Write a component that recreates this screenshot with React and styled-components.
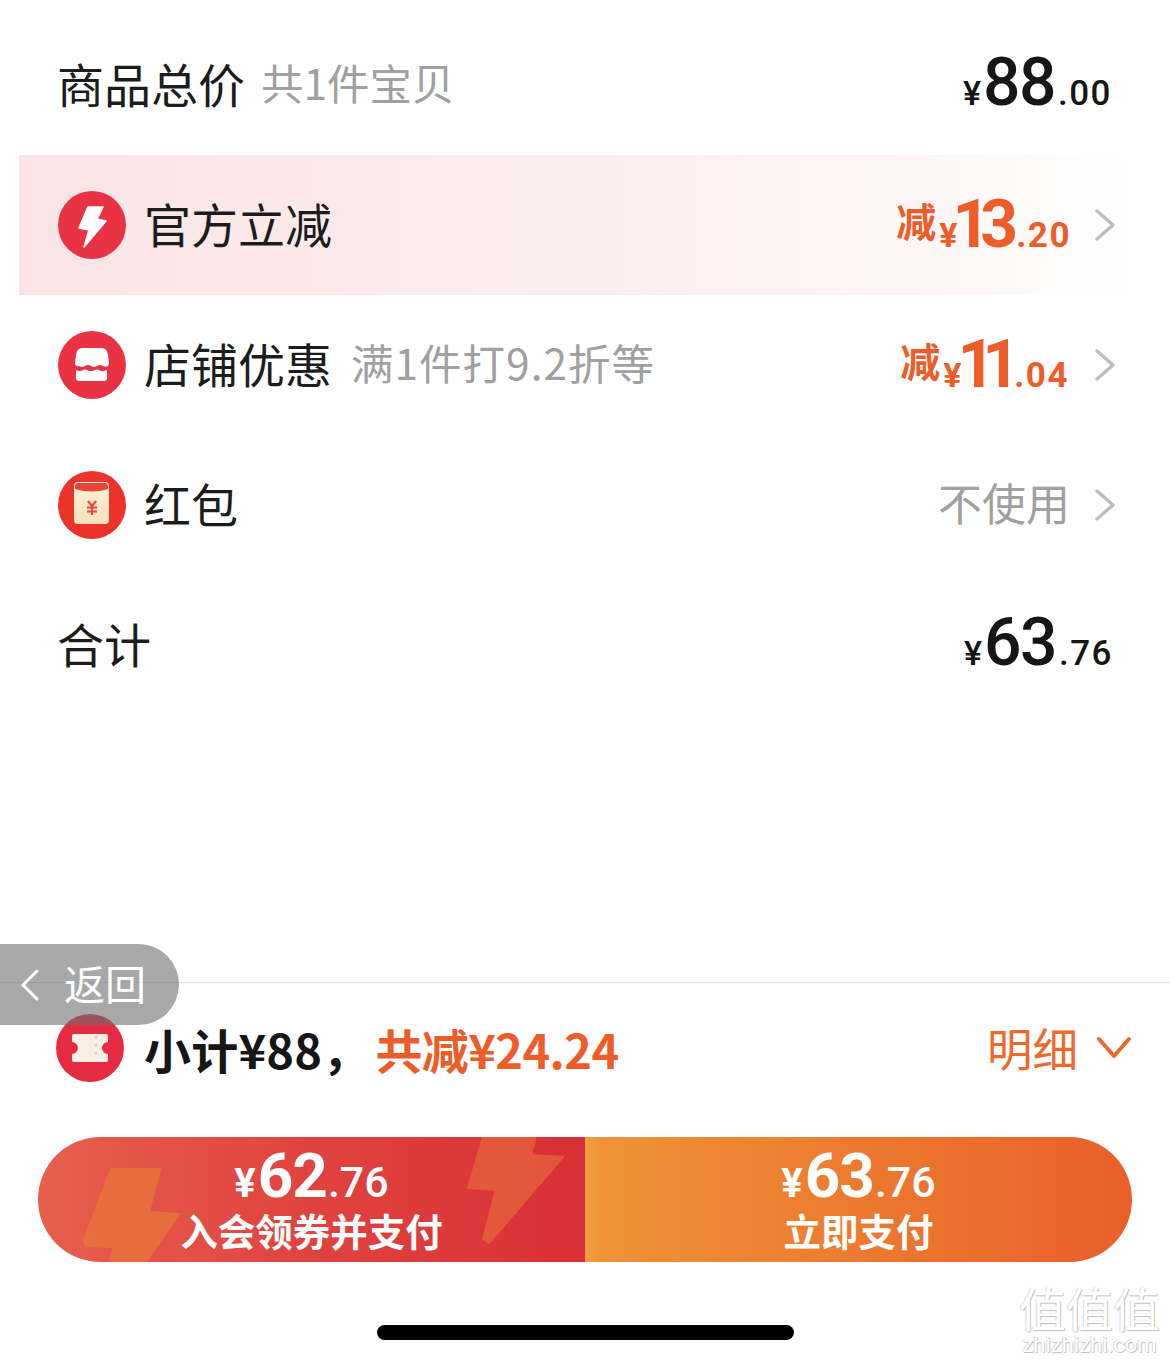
import React from "react";
import styled, { createGlobalStyle } from "styled-components";

const CJK = `"Noto Sans CJK SC", "Noto Sans", sans-serif`;
const NUM = `Roboto, "Noto Sans CJK SC", sans-serif`;

const Global = createGlobalStyle`
  html, body { margin: 0; padding: 0; background: #fff; }
  body { font-family: ${CJK}; }
`;

const Page = styled.div`
  position: relative;
  width: 1170px;
  height: 1364px;
  overflow: hidden;
  background: #fff;
  display: flex;
  flex-direction: column;
  padding-top: 15px;
  box-sizing: border-box;
`;

const Rows = styled.div`
  display: flex;
  flex-direction: column;
  height: 967px;
  flex: none;
`;

const Row = styled.div`
  height: 140px;
  flex: none;
  margin: 0 40px 0 19px;
  padding: 0 0 0 39px;
  display: flex;
  align-items: center;
  box-sizing: border-box;
  background: ${(p) =>
    p.$hot ? "linear-gradient(90deg, #fae4e5 0%, #fdf0f1 60%, #fef7f7 85%, #fff 100%)" : "transparent"};
`;

const Icon = styled.svg`
  width: 68px;
  height: 68px;
  flex: none;
  margin-right: ${(p) => p.$mr ?? 19}px;
  display: block;
`;

const Label = styled.span`
  font-size: 47px;
  font-weight: 400;
  color: #1c1c1c;
  line-height: 1;
  white-space: nowrap;
  margin-bottom: 6px;
  margin-left: -1px;
`;

const Hint = styled.span`
  font-size: 42.5px;
  font-weight: 400;
  color: #a0a0a0;
  line-height: 1;
  margin-left: ${(p) => p.$gap || 16}px;
  letter-spacing: ${(p) => p.$track || 0}px;
  white-space: nowrap;
  margin-bottom: 6px;
`;

const Spacer = styled.div`
  flex: 1;
`;

const Amount = styled.div`
  display: flex;
  align-items: baseline;
  font-family: ${NUM};
  font-weight: 500;
  line-height: 1;
  white-space: nowrap;
  color: ${(p) => p.$color || "#161616"};
  margin-right: ${(p) => p.$mr || 0}px;
  margin-bottom: ${(p) => p.$up || 0}px;
`;

const Minus = styled.span`
  font-family: ${CJK};
  font-size: 40px;
  font-weight: 700;
  position: relative;
  top: -10px;
  margin-right: 3px;
`;

const Yen = styled.span`
  font-size: 34px;
  font-weight: ${(p) => p.$weight || 500};
  margin-right: ${(p) => p.$after ?? 2}px;
`;

const Big = styled.span`
  font-size: 66px;
  font-weight: ${(p) => p.$weight || 500};
  letter-spacing: ${(p) => p.$track ?? -1.5}px;
  margin-right: ${(p) => p.$after || 0}px;
`;

const Cents = styled.span`
  font-size: 35px;
  font-weight: ${(p) => p.$weight || 500};
  margin-left: 3px;
  letter-spacing: 1.5px;
`;

const Muted = styled.span`
  font-size: 44px;
  font-weight: 400;
  color: #a0a0a0;
  margin-right: 24px;
  line-height: 1;
  margin-bottom: 6px;
`;

const Chevron = styled.svg`
  width: 22px;
  height: 34px;
  flex: none;
  display: block;
  margin-right: 14px;
`;

const Footer = styled.div`
  border-top: 1px solid #dfdfdf;
  flex: 1;
  display: flex;
  flex-direction: column;
  position: relative;
`;

const SubRow = styled.div`
  height: 134px;
  padding: 0 38px 4px 56px;
  box-sizing: border-box;
  display: flex;
  align-items: center;
  flex: none;
`;

const SubText = styled.span`
  font-size: 47px;
  font-weight: 700;
  letter-spacing: ${(p) => p.$track ?? 0.2}px;
  color: ${(p) => p.$color || "#161616"};
  white-space: nowrap;
  line-height: 1;
  margin-left: ${(p) => p.$ml || 0}px;
`;

const Detail = styled.span`
  font-size: 45.5px;
  font-weight: 400;
  color: #ec6a2b;
  line-height: 1;
  margin-right: 18px;
`;

const Caret = styled.svg`
  width: 36px;
  height: 24px;
  flex: none;
  display: block;
`;

const Buttons = styled.div`
  margin: 20px 38px 0;
  height: 125px;
  display: flex;
  border-radius: 63px;
  overflow: hidden;
  flex: none;
`;

const PayButton = styled.div`
  flex: ${(p) => p.$w}px 0 0;
  position: relative;
  overflow: hidden;
  display: flex;
  flex-direction: column;
  align-items: center;
  padding-top: 9px;
  box-sizing: border-box;
  color: #fff;
  background: ${(p) => p.$bg};
`;

const Bolts = styled.svg`
  position: absolute;
  left: 0;
  top: 0;
  width: 547px;
  height: 125px;
`;

const PayAmount = styled.div`
  position: relative;
  display: flex;
  align-items: baseline;
  font-family: ${NUM};
  font-weight: 700;
  line-height: 60px;
  height: 60px;
`;

const PayYen = styled.span`
  font-size: 40px;
  margin-right: 2px;
`;

const PayBig = styled.span`
  font-size: 62px;
  letter-spacing: -1px;
`;

const PayCents = styled.span`
  font-size: 43px;
  font-weight: 500;
  margin-left: 1px;
`;

const PayLabel = styled.div`
  position: relative;
  top: 2px;
  font-size: 37.5px;
  font-weight: 700;
  line-height: 44px;
  white-space: nowrap;
`;

const HomeBar = styled.div`
  width: 417px;
  height: 15px;
  border-radius: 8px;
  background: #000;
  margin: 63px auto 0;
  flex: none;
`;

const BackPill = styled.div`
  position: absolute;
  left: 0;
  top: 944px;
  width: 179px;
  height: 81px;
  border-radius: 0 41px 41px 0;
  background: rgba(110, 110, 110, 0.6);
  display: flex;
  align-items: center;
  padding-left: 19px;
  box-sizing: border-box;
  color: #fff;
  font-size: 41px;
  font-weight: 400;
  gap: 23px;
`;

const BackText = styled.span`
  margin-bottom: 4px;
  line-height: 1;
`;

const BackIcon = styled.svg`
  width: 22px;
  height: 36px;
  flex: none;
`;

const Watermark = styled.div`
  position: absolute;
  right: 8px;
  bottom: 8px;
  width: 145px;
  text-align: center;
  color: #fff;
  text-shadow: 1px 1px 1px #bdbdbd, -1px 0 1px #d8d8d8;
  line-height: 1;
`;

const MarkGlyphs = styled.div`
  font-size: 47px;
  font-weight: 400;
  white-space: nowrap;
`;

const MarkUrl = styled.div`
  font-family: Roboto, sans-serif;
  font-size: 22px;
  margin-top: 4px;
`;

const Price = ({ big, cents, color, mr, track, after, yenAfter }) => (
  <Amount $color={color} $mr={mr}>
    <Minus>减</Minus>
    <Yen $weight={700} $after={yenAfter}>¥</Yen>
    <Big $weight={700} $track={track} $after={after}>{big}</Big>
    <Cents $weight={700}>.{cents}</Cents>
  </Amount>
);

const Arrow = () => (
  <Chevron viewBox="0 0 22 34">
    <path d="M3 3 L19 17 L3 31" fill="none" stroke="#bdbdbd" strokeWidth="3.4" strokeLinecap="round" strokeLinejoin="round" />
  </Chevron>
);

const Flash = () => (
  <Icon viewBox="0 0 68 68">
    <circle cx="34" cy="34" r="34" fill="#e93344" />
    <path d="M30 16 L45 16 L39 28 L48 30 L26 56 L31 39 L21 37 Z" fill="#fff" stroke="#fff" strokeWidth="1.6" strokeLinejoin="round" />
  </Icon>
);

const Shop = () => (
  <Icon viewBox="0 0 68 68">
    <circle cx="34" cy="34" r="34" fill="#e93344" />
    <path d="M24 17 H44 Q49 17 50 24 L51 33 Q50 37 45 35 Q42 33 39 35 Q36 37 33 35 Q30 33 27 35 Q24 37 21 35 Q18 36 17 33 L18 24 Q19 17 24 17 Z" fill="#fff" />
    <path d="M18 39 Q21 41 24 39.500 Q27 37.500 30 39.500 Q33 41 36 39.500 Q39 37.500 42 39.500 Q45 41 49 39 V47 Q49 50 46 50 H21 Q18 50 18 47 Z" fill="#fff" />
  </Icon>
);

const Envelope = () => (
  <Icon viewBox="0 0 68 68">
    <circle cx="34" cy="34" r="34" fill="#ec3329" />
    <defs>
      <linearGradient id="env" x1="0" y1="0" x2="0" y2="1">
        <stop offset="0" stopColor="#fdf1da" />
        <stop offset="1" stopColor="#f9e0b8" />
      </linearGradient>
    </defs>
    <rect x="16" y="11" width="35" height="42" rx="4" fill="url(#env)" />
    <path d="M17 15 Q17 12 20 12 H47 Q50 12 50 15 V18 Q34 23 17 18 Z" fill="#ee4238" />
    <path d="M30 30 L34 35 L38 30 M34 35 V44 M29 36.500 H39 M29 40.500 H39" fill="none" stroke="#e5483f" strokeWidth="2.200" />
  </Icon>
);

const Ticket = () => (
  <Icon viewBox="0 0 68 68" $mr={0}>
    <circle cx="34" cy="34" r="34" fill="#e62c42" />
    <path d="M18 20 H50 Q52 20 52 22 V28 A6 6 0 0 0 52 40 V46 Q52 48 50 48 H18 Q16 48 16 46 V40 A6 6 0 0 0 16 28 V22 Q16 20 18 20 Z" fill="#f9efe6" />
    <path d="M40 22 V46" stroke="#e4cfc4" strokeWidth="2.500" strokeDasharray="3 5" />
  </Icon>
);

export default function App() {
  return (
    <Page>
      <Global />
      <Rows>
        <Row>
          <Label>商品总价</Label>
          <Hint>共1件宝贝</Hint>
          <Spacer />
          <Amount $mr={18} $up={4}>
            <Yen>¥</Yen>
            <Big>88</Big>
            <Cents>.00</Cents>
          </Amount>
        </Row>
        <Row $hot>
          <Flash />
          <Label>官方立减</Label>
          <Spacer />
          <Price big="13" cents="20" color="#ec5d2a" mr={23} track={-10} after={5} yenAfter={-5} />
          <Arrow />
        </Row>
        <Row>
          <Shop />
          <Label>店铺优惠</Label>
          <Hint $gap={19} $track={1}>满1件打9.2折等</Hint>
          <Spacer />
          <Price big="11" cents="04" color="#ec5d2a" mr={25} track={-13} after={4} yenAfter={-4} />
          <Arrow />
        </Row>
        <Row>
          <Envelope />
          <Label>红包</Label>
          <Spacer />
          <Muted>不使用</Muted>
          <Arrow />
        </Row>
        <Row>
          <Label>合计</Label>
          <Spacer />
          <Amount $mr={17} $up={4}>
            <Yen>¥</Yen>
            <Big>63</Big>
            <Cents>.76</Cents>
          </Amount>
        </Row>
      </Rows>
      <Footer>
        <SubRow>
          <Ticket />
          <SubText $ml={20}>小计¥88，</SubText>
          <SubText $color="#ec5d2a" $ml={6} $track={-0.6}>共减¥24.24</SubText>
          <Spacer />
          <Detail>明细</Detail>
          <Caret viewBox="0 0 36 24">
            <path d="M3 3 L18 20 L33 3" fill="none" stroke="#ec6a2b" strokeWidth="4" strokeLinecap="round" strokeLinejoin="round" />
          </Caret>
        </SubRow>
        <Buttons>
          <PayButton $w={547} $bg="linear-gradient(90deg, #e85f4e 0%, #e0433f 50%, #d92f36 100%)">
            <Bolts viewBox="0 0 547 125">
              <path d="M73 32 H122 L111 75 L141 77 L108 125 H72 L76 110 L48 109 L46 103 Z" fill="#e8713c" stroke="#e8713c" strokeWidth="2" strokeLinejoin="round" opacity="0.9" />
              <path d="M445 0 H498 L493 18 L525 20 L451 106 L445 102 L458 53 L430 51 L432 44 Z" fill="#e8713c" stroke="#e8713c" strokeWidth="2" strokeLinejoin="round" opacity="0.6" />
            </Bolts>
            <PayAmount>
              <PayYen>¥</PayYen>
              <PayBig>62</PayBig>
              <PayCents>.76</PayCents>
            </PayAmount>
            <PayLabel>入会领券并支付</PayLabel>
          </PayButton>
          <PayButton $w={547} $bg="linear-gradient(90deg, #f0a03f 0%, #ef9236 3%, #ec7a2f 50%, #ea5e2a 100%)">
            <PayAmount>
              <PayYen>¥</PayYen>
              <PayBig>63</PayBig>
              <PayCents>.76</PayCents>
            </PayAmount>
            <PayLabel>立即支付</PayLabel>
          </PayButton>
        </Buttons>
        <HomeBar />
      </Footer>
      <BackPill>
        <BackIcon viewBox="0 0 22 36">
          <path d="M18 4 L4 18 L18 32" fill="none" stroke="#fff" strokeWidth="3" strokeLinecap="round" strokeLinejoin="round" />
        </BackIcon>
        <BackText>返回</BackText>
      </BackPill>
      <Watermark>
        <MarkGlyphs>值值值</MarkGlyphs>
        <MarkUrl>zhizhizhi.com</MarkUrl>
      </Watermark>
    </Page>
  );
}
